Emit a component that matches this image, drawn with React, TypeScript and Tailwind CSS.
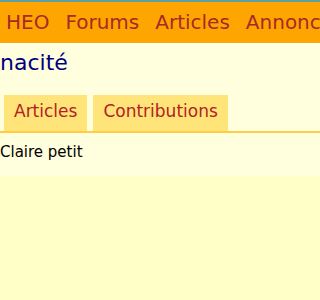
import React from 'react';

const navItems = ['HEO', 'Forums', 'Articles', 'Annonces'];
const tabs = ['Articles', 'Contributions'];

export default function App() {
  return (
    <div className="w-[320px] h-[300px] overflow-hidden bg-[#ffffc8] font-['DejaVu_Sans',sans-serif]">
      <div className="h-[2px] bg-[#5f9ea0]" />
      <nav className="h-[41px] bg-[#ffa500] flex gap-4 pl-[6px] pt-[8px] text-[20px] leading-[24px] text-[#a52a2a] whitespace-nowrap">
        {navItems.map((item) => (
          <span key={item}>{item}</span>
        ))}
      </nav>
      <div className="h-[2px] bg-[#fffff0]" />

      <div className="bg-[#ffffdd]">
        <h1 className="pt-[5px] text-[22px] leading-[26px] text-[#000080] whitespace-nowrap">nacité</h1>
        <div className="mt-[19px] flex gap-[6px] pl-[4px] border-b-2 border-[#ffcc44]">
          {tabs.map((tab) => (
            <div
              key={tab}
              className="h-[36px] px-[10px] pt-[6px] bg-[#ffe47a] text-[17px] leading-[20px] text-[#b22222] whitespace-nowrap"
            >
              {tab}
            </div>
          ))}
        </div>
      </div>

      <div className="h-[43px] bg-[#ffffdd] pt-[9px] text-[15px] leading-[20px] text-black whitespace-nowrap">
        Claire petit
      </div>
    </div>
  );
}
